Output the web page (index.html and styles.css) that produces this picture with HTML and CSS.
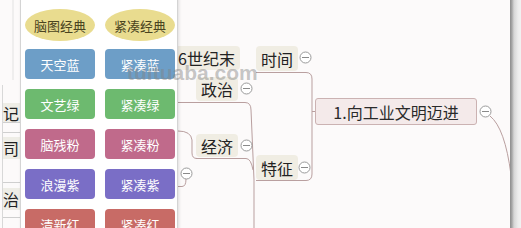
FILE: index.html
```html
<!DOCTYPE html>
<html lang="zh">
<head>
<meta charset="utf-8">
<link rel="stylesheet" href="styles.css">
</head>
<body>
<div class="stage">
  <div class="map">
    <svg class="links" width="521" height="228" viewBox="0 0 521 228">
      <g fill="none" stroke="#b99f9f" stroke-width="1">
        <path d="M13,0 V80" stroke="#e2e2e2"/>
        <path d="M2.5,85 V228" stroke="#d8d8d8"/>
        <path d="M256,72.5 H306 Q312,72.5 312,79 V174 Q312,180.5 306,180.5 H256"/>
        <path d="M312,111.5 H315"/>
        <path d="M178,102.5 H245 Q251,102.5 251,110 L254,180 V228"/>
        <path d="M196,158.5 H246 Q251,158.5 253,170"/>
        <path d="M178,131 Q191,131 192,140 V153 Q192,158.5 197,158.5"/>
        <path d="M178,186.5 H182 Q186,186.5 186,179"/>
        <path d="M490,116 Q505,128 511,175"/>
        <path d="M3,122.5 H20 M3,132.5 H20 M3,182.5 H20 M3,217.5 H20" stroke="#cfcfcf"/>
      </g>
      <g fill="#fff" stroke="#9a9a9a" stroke-width="1">
        <circle cx="305.5" cy="57.5" r="5.5"/>
        <circle cx="246.5" cy="88.5" r="5.5"/>
        <circle cx="246.5" cy="145.5" r="5.5"/>
        <circle cx="304.5" cy="167.5" r="5.5"/>
        <circle cx="485.5" cy="111.5" r="5.5"/>
        <circle cx="186.5" cy="173.5" r="5.5"/>
      </g>
      <g stroke="#8a8a8a" stroke-width="1">
        <path d="M302,57.5 H309"/>
        <path d="M243,88.5 H250"/>
        <path d="M243,145.5 H250"/>
        <path d="M301,167.5 H308"/>
        <path d="M482,111.5 H489"/>
        <path d="M183,173.5 H190"/>
      </g>
    </svg>

    <div class="node edge-node n-ji">记</div>
    <div class="node edge-node n-si">司</div>
    <div class="node edge-node n-zhi">治</div>

    <div class="node n-century">16世纪末</div>
    <div class="node n-time">时间</div>
    <div class="node n-politics">政治</div>
    <div class="node n-economy">经济</div>
    <div class="node n-feature">特征</div>
    <div class="node main-node">1.向工业文明迈进</div>

    <div class="right-edge"></div>
  </div>

  <div class="panel">
    <div class="row first">
      <div class="btn pill">脑图经典</div>
      <div class="btn pill">紧凑经典</div>
    </div>
    <div class="row">
      <div class="btn blue">天空蓝</div>
      <div class="btn blue">紧凑蓝</div>
    </div>
    <div class="row">
      <div class="btn green">文艺绿</div>
      <div class="btn green">紧凑绿</div>
    </div>
    <div class="row">
      <div class="btn pink">脑残粉</div>
      <div class="btn pink">紧凑粉</div>
    </div>
    <div class="row">
      <div class="btn purple">浪漫紫</div>
      <div class="btn purple">紧凑紫</div>
    </div>
    <div class="row">
      <div class="btn red">清新红</div>
      <div class="btn red">紧凑红</div>
    </div>
  </div>

  <div class="watermark">tuituaba.com</div>
</div>
</body>
</html>
```

FILE: styles.css
```css
* { box-sizing: border-box; }

html, body {
  margin: 0;
  padding: 0;
  background: #fcfafa;
}

.stage {
  position: relative;
  width: 521px;
  height: 228px;
  overflow: hidden;
  background: #fcfafa;
  font-family: "Noto Sans CJK SC", "Noto Sans", sans-serif;
}

.map {
  position: absolute;
  inset: 0;
}

.links {
  position: absolute;
  left: 0;
  top: 0;
}

.node {
  position: absolute;
  display: flex;
  align-items: center;
  justify-content: center;
  font-size: 16px;
  line-height: 1;
  color: #222;
  background: #f0ede3;
  border-radius: 4px;
  white-space: nowrap;
}

.edge-node {
  justify-content: flex-end;
  padding-right: 1px;
  width: 17px;
  left: 3px;
  background: #eeede6;
  border-radius: 0;
}
.n-ji  { top: 103px; height: 19px; }
.n-si  { top: 137px; height: 22px; }
.n-zhi { top: 188px; height: 22px; }

.n-century { left: 162px; top: 46px; width: 78px; height: 24px; justify-content: flex-end; padding-right: 5px; }
.n-time    { left: 256px; top: 46px; width: 42px; height: 25px; }
.n-politics{ left: 196px; top: 77px; width: 42px; height: 24px; }
.n-economy { left: 196px; top: 134px; width: 42px; height: 23px; }
.n-feature { left: 256px; top: 155px; width: 42px; height: 25px; }

.main-node {
  left: 315px;
  top: 98px;
  width: 162px;
  height: 27px;
  background: #f4eaea;
  border: 1px solid #cbb2b2;
  border-radius: 3px;
  font-size: 16px;
  color: #2a2a2a;
}

.right-edge {
  position: absolute;
  right: 0;
  top: 0;
  width: 11px;
  height: 228px;
  background: linear-gradient(to right, #8c8c8c 0, #a8a8a8 2px, #d6d6d6 4px, #ececec 8px, #f2f2f2 11px);
}

.panel {
  position: absolute;
  left: 20px;
  top: -2px;
  width: 158px;
  height: 240px;
  background: #fff;
  border: 1px solid #d4d4d4;
  box-shadow: 1px 0 3px rgba(0,0,0,0.12);
  padding: 10px 0 0 4px;
  display: flex;
  flex-direction: column;
  gap: 10px;
}

.row {
  display: flex;
  gap: 10px;
}
.row.first {
  margin-bottom: -2px;
}

.btn {
  width: 70px;
  height: 30px;
  border-radius: 4px;
  display: flex;
  align-items: center;
  justify-content: center;
  font-size: 13px;
  color: #fff;
}

.pill {
  height: 32px;
  border-radius: 50%;
  background: #e9dc8f;
  color: #4a4420;
}
.blue   { background: #6d9ec7; }
.green  { background: #6dba6f; }
.pink   { background: #c06a8b; }
.purple { background: #7a6ec6; }
.red    { background: #c86b66; }

.watermark {
  position: absolute;
  left: 127px;
  top: 61px;
  font-family: "Liberation Sans", Arial, sans-serif;
  font-weight: bold;
  font-size: 21px;
  color: rgba(130, 130, 130, 0.45);
  pointer-events: none;
}
```
